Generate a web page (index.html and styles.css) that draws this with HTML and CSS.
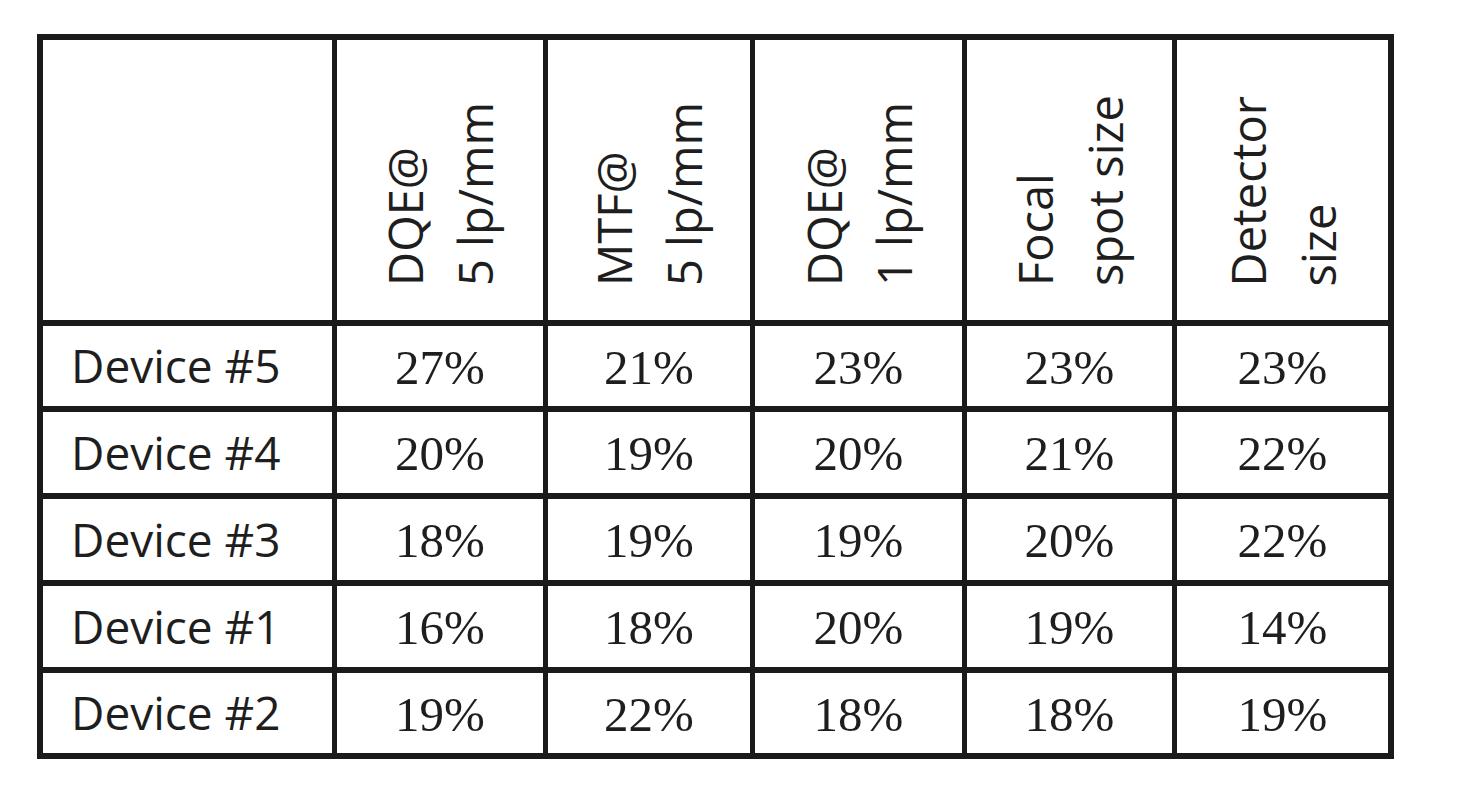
FILE: index.html
```html
<!DOCTYPE html>
<html lang="en">
<head>
<meta charset="utf-8">
<title>Device comparison</title>
<link rel="stylesheet" href="styles.css">
</head>
<body>
<div class="grid">
  <div class="cell head"></div>
  <div class="cell head"><span class="vtext">DQE@<br>5 lp/mm</span></div>
  <div class="cell head"><span class="vtext">MTF@<br>5 lp/mm</span></div>
  <div class="cell head"><span class="vtext">DQE@<br>1 lp/mm</span></div>
  <div class="cell head"><span class="vtext">Focal<br>spot size</span></div>
  <div class="cell head"><span class="vtext">Detector<br>size</span></div>

  <div class="cell label">Device #5</div>
  <div class="cell num">27%</div>
  <div class="cell num">21%</div>
  <div class="cell num">23%</div>
  <div class="cell num">23%</div>
  <div class="cell num">23%</div>

  <div class="cell label">Device #4</div>
  <div class="cell num">20%</div>
  <div class="cell num">19%</div>
  <div class="cell num">20%</div>
  <div class="cell num">21%</div>
  <div class="cell num">22%</div>

  <div class="cell label">Device #3</div>
  <div class="cell num">18%</div>
  <div class="cell num">19%</div>
  <div class="cell num">19%</div>
  <div class="cell num">20%</div>
  <div class="cell num">22%</div>

  <div class="cell label">Device #1</div>
  <div class="cell num">16%</div>
  <div class="cell num">18%</div>
  <div class="cell num">20%</div>
  <div class="cell num">19%</div>
  <div class="cell num">14%</div>

  <div class="cell label">Device #2</div>
  <div class="cell num">19%</div>
  <div class="cell num">22%</div>
  <div class="cell num">18%</div>
  <div class="cell num">18%</div>
  <div class="cell num">19%</div>
</div>
</body>
</html>
```

FILE: styles.css
```css
html, body {
  margin: 0;
  padding: 0;
  background: #ffffff;
}

body {
  padding: 34px 0 0 37px;
  font-family: "Open Sans", "DejaVu Sans", sans-serif;
  color: #1e1e1e;
}

.grid {
  display: inline-grid;
  grid-template-columns: 289px 206px 202px 207px 205px 211px;
  grid-template-rows: 280px 80px 81px 81px 81px 80px;
  column-gap: 5px;
  row-gap: 6px;
  padding: 6px;
  background: #1a1a1a;
}

.cell {
  background: #ffffff;
  display: flex;
  align-items: center;
}

.head {
  justify-content: center;
  align-items: flex-end;
  padding-bottom: 34px;
}

.vtext {
  writing-mode: vertical-rl;
  transform: rotate(180deg);
  font-size: 47px;
  line-height: 70px;
  white-space: nowrap;
  text-align: start;
}

.label {
  padding-left: 28px;
  font-size: 46px;
  padding-bottom: 2px;
}

.num {
  justify-content: center;
  font-family: "Liberation Serif", "DejaVu Serif", serif;
  font-size: 49px;
  padding-top: 2px;
}
```
